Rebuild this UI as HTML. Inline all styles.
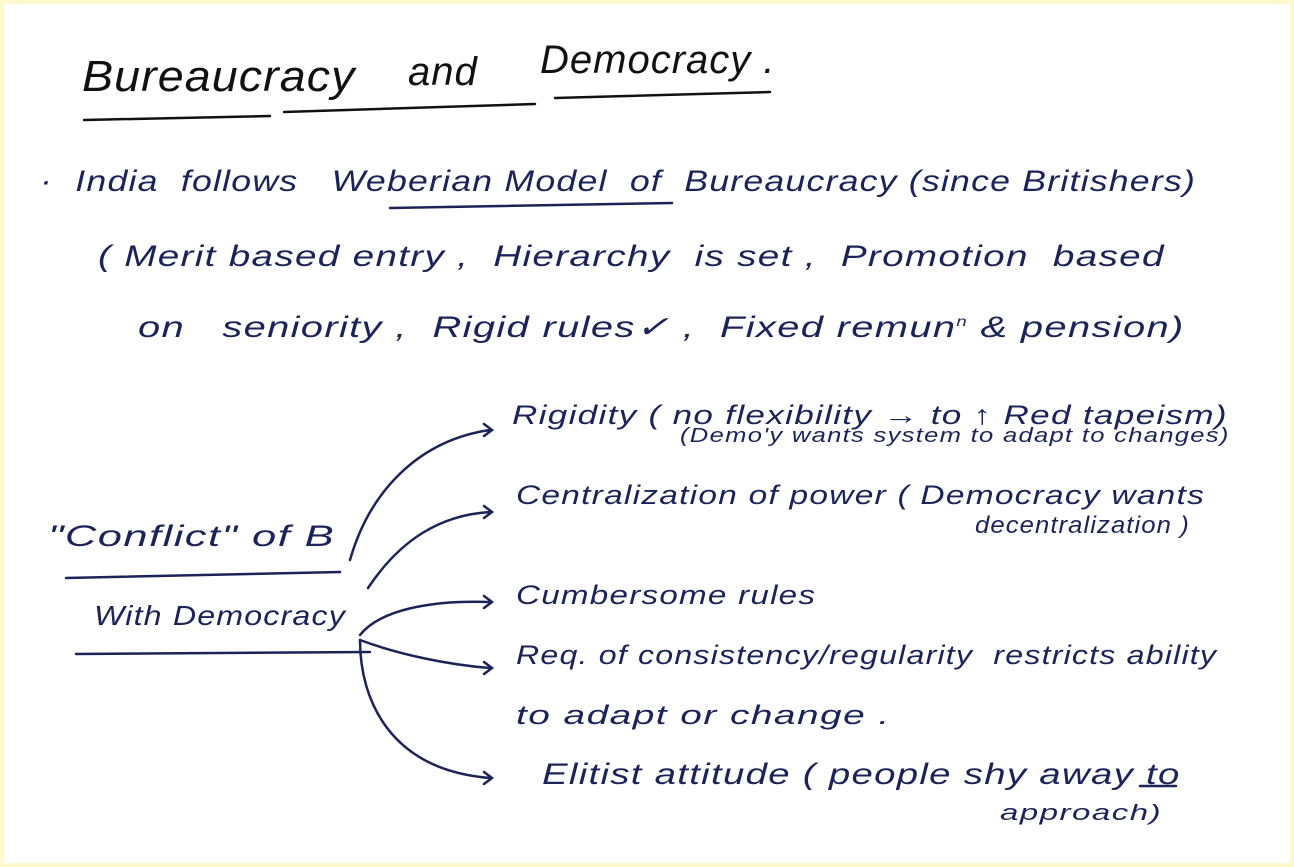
<!DOCTYPE html>
<html><head><style>
html,body{margin:0;padding:0}
body{width:1294px;height:867px;background:#fcf9cc;position:relative;overflow:hidden;font-family:"Liberation Sans",sans-serif}
.pg{position:absolute;left:4px;top:4px;width:1286px;height:859px;background:#fff}
.t{position:absolute;color:#1c2358;font-style:italic;white-space:nowrap;letter-spacing:1px;transform-origin:0 50%}
</style></head><body>
<div class="pg"></div>
<div class="t" style="left:82px;top:52px;font-size:44px;color:#111;transform:scaleX(1.06)">Bureaucracy</div>
<div class="t" style="left:408px;top:50px;font-size:40px;color:#111">and</div>
<div class="t" style="left:540px;top:38px;font-size:40px;color:#111">Democracy .</div>
<div class="t" style="left:40px;top:165px;font-size:30px;transform:scaleX(1.19)">·&nbsp;&nbsp;India&nbsp;&nbsp;follows&nbsp;&nbsp;&nbsp;Weberian Model&nbsp;&nbsp;of&nbsp;&nbsp;Bureaucracy (since Britishers)</div>
<div class="t" style="left:98px;top:240px;font-size:30px;transform:scaleX(1.29)">( Merit based entry ,&nbsp;&nbsp;Hierarchy&nbsp;&nbsp;is set ,&nbsp;&nbsp;Promotion&nbsp;&nbsp;based</div>
<div class="t" style="left:138px;top:310px;font-size:30px;transform:scaleX(1.33)">on&nbsp;&nbsp;&nbsp;seniority ,&nbsp;&nbsp;Rigid rules✓ ,&nbsp;&nbsp;Fixed remun<sup style="font-size:14px">n</sup> &amp; pension)</div>
<div class="t" style="left:512px;top:400px;font-size:27px;transform:scaleX(1.3)">Rigidity ( no flexibility → to ↑ Red tapeism)</div>
<div class="t" style="left:680px;top:425px;font-size:20px;transform:scaleX(1.28)">(Demo'y wants system to adapt to changes)</div>
<div class="t" style="left:516px;top:480px;font-size:27px;transform:scaleX(1.24)">Centralization of power ( Democracy wants</div>
<div class="t" style="left:975px;top:512px;font-size:24px;transform:scaleX(1.07)">decentralization )</div>
<div class="t" style="left:48px;top:520px;font-size:30px;transform:scaleX(1.45)">"Conflict" of B</div>
<div class="t" style="left:94px;top:600px;font-size:28px;transform:scaleX(1.15)">With Democracy</div>
<div class="t" style="left:516px;top:580px;font-size:27px;transform:scaleX(1.23)">Cumbersome rules</div>
<div class="t" style="left:516px;top:640px;font-size:27px;transform:scaleX(1.19)">Req. of consistency/regularity&nbsp;&nbsp;restricts ability</div>
<div class="t" style="left:516px;top:700px;font-size:27px;transform:scaleX(1.44)">to adapt or change .</div>
<div class="t" style="left:542px;top:758px;font-size:30px;transform:scaleX(1.28)">Elitist attitude ( people shy away to</div>
<div class="t" style="left:1000px;top:800px;font-size:22px;transform:scaleX(1.5)">approach)</div>
<svg width="1294" height="867" style="position:absolute;left:0;top:0" fill="none" stroke="#1c2358" stroke-width="2.5" stroke-linecap="round">
<path d="M84 120 L270 116 M284 112 L535 104 M555 98 L770 92" stroke="#111"/>
<path d="M390 208 L672 203"/>
<path d="M66 578 L340 572"/>
<path d="M76 654 L370 652"/>
<path d="M350 560 C370 490 420 440 490 430 M484 424 L492 430 L484 436"/>
<path d="M368 588 C400 540 440 515 490 512 M484 506 L492 512 L484 518"/>
<path d="M360 635 C380 610 430 600 490 602 M484 596 L492 602 L484 608"/>
<path d="M360 640 C400 655 450 665 490 668 M484 662 L492 668 L484 674"/>
<path d="M360 640 C360 700 390 770 490 778 M484 772 L492 778 L484 784"/>
<path d="M1140 786 L1176 786"/>
</svg>
</body></html>
